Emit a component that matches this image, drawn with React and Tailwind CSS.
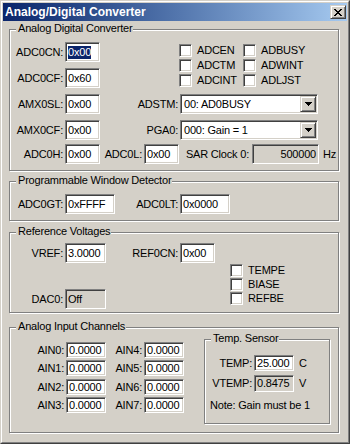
import React from "react";

const sunken =
  "border border-t-[#808080] border-l-[#808080] border-r-white border-b-white shadow-[inset_1px_1px_0_#404040,inset_-1px_-1px_0_#d4d0c8]";
const raised =
  "border border-t-[#d4d0c8] border-l-[#d4d0c8] border-r-[#404040] border-b-[#404040] shadow-[inset_1px_1px_0_#ffffff,inset_-1px_-1px_0_#808080] bg-[#d4d0c8]";
const etched =
  "relative border border-[#808080] shadow-[inset_1px_1px_0_#ffffff,1px_1px_0_#ffffff]";

function Edit({ w, h = "h-[20px]", ro, right, ml = "ml-[2px]", children }) {
  return (
    <div
      className={`${sunken} ${w} ${h} ${ml} shrink-0 flex items-center px-[2px] whitespace-nowrap overflow-hidden ${
        ro ? "bg-[#d4d0c8]" : "bg-white"
      } ${right ? "justify-end" : ""}`}
    >
      {children}
    </div>
  );
}

function Lbl({ w, children }) {
  return <div className={`${w} shrink-0 text-right whitespace-nowrap`}>{children}</div>;
}

function Arrow() {
  return (
    <svg width="7" height="4" viewBox="0 0 7 4" shapeRendering="crispEdges">
      <path d="M0 0h7v1h-1v1h-1v1h-1v1h-1v-1h-1v-1h-1v-1h-1z" fill="#000" />
    </svg>
  );
}

function Select({ w, children }) {
  return (
    <div className={`${sunken} ${w} h-[20px] ml-[2px] bg-white flex items-stretch p-[1px] shrink-0`}>
      <div className="flex-1 flex items-center pl-[2px] whitespace-nowrap overflow-hidden">{children}</div>
      <div className={`${raised} w-[16px] flex items-center justify-center`}>
        <Arrow />
      </div>
    </div>
  );
}

function Check({ children }) {
  return (
    <div className="flex items-center h-[14px]">
      <div className={`${sunken} w-[13px] h-[13px] bg-white shrink-0`} />
      <span className="ml-[5px] whitespace-nowrap">{children}</span>
    </div>
  );
}

function Legend({ children }) {
  return (
    <span className="absolute left-[6px] top-[-8px] bg-[#d4d0c8] pl-[2px] pr-[1px] whitespace-nowrap">
      {children}
    </span>
  );
}

function CloseX() {
  return (
    <svg width="8" height="7" viewBox="0 0 8 7" shapeRendering="crispEdges">
      <path
        d="M0 0h2v1h-2z M6 0h2v1h-2z M1 1h2v1h-2z M5 1h2v1h-2z M2 2h4v1h-4z M3 3h2v1h-2z M2 4h4v1h-4z M1 5h2v1h-2z M5 5h2v1h-2z M0 6h2v1h-2z M6 6h2v1h-2z"
        fill="#000"
      />
    </svg>
  );
}

function AinRow({ a, b, className = "" }) {
  return (
    <div className={`flex items-center h-[16px] ${className}`}>
      <Lbl w="w-[54px]">{a}:</Lbl>
      <Edit w="w-[40px]" h="h-[16px]">0.0000</Edit>
      <Lbl w="w-[36px]">{b}:</Lbl>
      <Edit w="w-[40px]" h="h-[16px]">0.0000</Edit>
    </div>
  );
}

export default function App() {
  return (
    <div className="w-[350px] h-[444px] bg-[#d4d0c8] border border-t-[#d4d0c8] border-l-[#d4d0c8] border-r-[#404040] border-b-[#404040] font-['Liberation_Sans',Arial,sans-serif] text-[11px] leading-[13px] tracking-[-0.2px] text-black overflow-hidden">
      <div className="h-full border border-t-white border-l-white border-r-[#808080] border-b-[#808080] p-[1px] flex flex-col">
        {/* Title bar */}
        <div className="h-[18px] shrink-0 bg-linear-to-r from-[#0a246a] to-[#a6caf0] flex items-center pl-[2px] pr-[1px]">
          <span className="font-bold text-white text-[12px] tracking-normal leading-[14px] whitespace-nowrap">
            Analog/Digital Converter
          </span>
          <div className={`${raised} ml-auto w-[16px] h-[14px] flex items-center justify-center pr-[1px]`}>
            <CloseX />
          </div>
        </div>

        {/* Client area */}
        <div className="flex flex-col pl-[6px]">
          {/* Analog Digital Converter */}
          <div className={`${etched} w-[330px] h-[142px] mt-[8px] pt-[12px]`}>
            <Legend>Analog Digital Converter</Legend>
            <div className="flex">
              <div className="flex flex-col gap-[6px]">
                <div className="flex items-center h-[20px]">
                  <Lbl w="w-[53px]">ADC0CN:</Lbl>
                  <Edit w="w-[35px]">
                    <span className="bg-[#0a246a] text-white">0x00</span>
                  </Edit>
                </div>
                <div className="flex items-center h-[20px]">
                  <Lbl w="w-[53px]">ADC0CF:</Lbl>
                  <Edit w="w-[35px]">0x60</Edit>
                </div>
              </div>
              <div className="ml-[79px] mt-[1px] grid grid-cols-[64px_auto]">
                <Check>ADCEN</Check>
                <Check>ADBUSY</Check>
                <Check>ADCTM</Check>
                <Check>ADWINT</Check>
                <Check>ADCINT</Check>
                <Check>ADLJST</Check>
              </div>
            </div>
            <div className="flex items-center h-[20px] mt-[6px]">
              <Lbl w="w-[53px]">AMX0SL:</Lbl>
              <Edit w="w-[35px]">0x00</Edit>
              <Lbl w="w-[78px]">ADSTM:</Lbl>
              <Select w="w-[138px]">00: AD0BUSY</Select>
            </div>
            <div className="flex items-center h-[20px] mt-[6px]">
              <Lbl w="w-[53px]">AMX0CF:</Lbl>
              <Edit w="w-[35px]">0x00</Edit>
              <Lbl w="w-[78px]">PGA0:</Lbl>
              <Select w="w-[138px]">000: Gain = 1</Select>
            </div>
            <div className="flex items-center h-[20px] mt-[4px]">
              <Lbl w="w-[53px]">ADC0H:</Lbl>
              <Edit w="w-[35px]">0x00</Edit>
              <Lbl w="w-[42px]">ADC0L:</Lbl>
              <Edit w="w-[35px]">0x00</Edit>
              <Lbl w="w-[70px]">SAR Clock 0:</Lbl>
              <Edit w="w-[67px]" ml="ml-[3px]" ro right>
                500000
              </Edit>
              <span className="ml-[4px]">Hz</span>
            </div>
          </div>

          {/* Programmable Window Detector */}
          <div className={`${etched} w-[330px] h-[40px] mt-[10px] pt-[12px]`}>
            <Legend>Programmable Window Detector</Legend>
            <div className="flex items-center h-[20px]">
              <Lbl w="w-[53px]">ADC0GT:</Lbl>
              <Edit w="w-[50px]">0xFFFF</Edit>
              <Lbl w="w-[63px]">ADC0LT:</Lbl>
              <Edit w="w-[50px]">0x0000</Edit>
            </div>
          </div>

          {/* Reference Voltages */}
          <div className={`${etched} w-[330px] h-[81px] mt-[11px] pt-[10px]`}>
            <Legend>Reference Voltages</Legend>
            <div className="flex items-center h-[20px]">
              <Lbl w="w-[53px]">VREF:</Lbl>
              <Edit w="w-[41px]">3.0000</Edit>
              <Lbl w="w-[72px]">REF0CN:</Lbl>
              <Edit w="w-[35px]">0x00</Edit>
            </div>
            <div className="flex">
              <div className="w-[220px] shrink-0">
                <div className="flex items-center h-[20px] mt-[26px]">
                  <Lbl w="w-[53px]">DAC0:</Lbl>
                  <Edit w="w-[41px]" ro>
                    Off
                  </Edit>
                </div>
              </div>
              <div className="flex flex-col">
                <Check>TEMPE</Check>
                <Check>BIASE</Check>
                <Check>REFBE</Check>
              </div>
            </div>
          </div>

          {/* Analog Input Channels */}
          <div className={`${etched} w-[330px] h-[106px] mt-[14px] flex items-start`}>
            <Legend>Analog Input Channels</Legend>
            <div className="flex flex-col mt-[14px]">
              <AinRow a="AIN0" b="AIN4" />
              <AinRow a="AIN1" b="AIN5" className="mt-[2px]" />
              <AinRow a="AIN2" b="AIN6" className="mt-[3px]" />
              <AinRow a="AIN3" b="AIN7" className="mt-[2px]" />
            </div>
            <div className={`${etched} w-[126px] h-[85px] ml-[20px] mt-[11px] pt-[15px]`}>
              <Legend>Temp. Sensor</Legend>
              <div className="flex items-center h-[16px]">
                <Lbl w="w-[47px]">TEMP:</Lbl>
                <Edit w="w-[40px]" h="h-[16px]">
                  25.000
                </Edit>
                <span className="ml-[5px]">C</span>
              </div>
              <div className="flex items-center h-[17px] mt-[4px]">
                <Lbl w="w-[47px]">VTEMP:</Lbl>
                <Edit w="w-[40px]" h="h-[17px]" ro>
                  0.8475
                </Edit>
                <span className="ml-[5px]">V</span>
              </div>
              <div className="mt-[7px] pl-[5px] whitespace-nowrap">Note: Gain must be 1</div>
            </div>
          </div>
        </div>
      </div>
    </div>
  );
}
